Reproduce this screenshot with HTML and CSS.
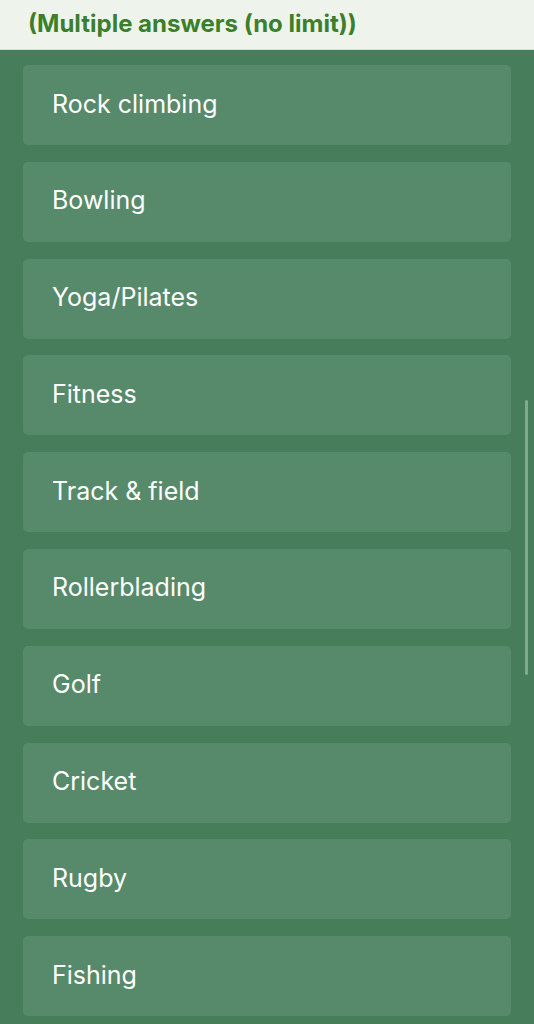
FILE: index.html
```html
<!DOCTYPE html>
<html lang="en">
<head>
<meta charset="utf-8">
<link rel="stylesheet" href="styles.css">
</head>
<body>
<header class="hint">(Multiple answers (no limit))</header>
<main class="options">
  <div class="option">Rock climbing</div>
  <div class="option">Bowling</div>
  <div class="option">Yoga/Pilates</div>
  <div class="option">Fitness</div>
  <div class="option">Track &amp; field</div>
  <div class="option">Rollerblading</div>
  <div class="option">Golf</div>
  <div class="option">Cricket</div>
  <div class="option">Rugby</div>
  <div class="option">Fishing</div>
</main>
<div class="scrollbar"></div>
</body>
</html>
```
FILE: styles.css
```css
html, body {
  margin: 0;
  padding: 0;
}
body {
  width: 534px;
  height: 1024px;
  overflow: hidden;
  background: #477d5b;
  font-family: Inter, "Noto Sans", sans-serif;
  position: relative;
}
.hint {
  height: 50px;
  box-sizing: border-box;
  background: #eef3ec;
  color: #3c7f2b;
  font-weight: 700;
  font-size: 24px;
  display: flex;
  align-items: center;
  padding: 0 0 3px 28px;
  border-bottom: 1px solid #d9e3d6;
}
.options {
  display: flex;
  flex-direction: column;
  gap: 16.8px;
  padding: 15px 23px 0 23px;
}
.option {
  height: 80px;
  box-sizing: border-box;
  background: #578a6b;
  border-radius: 5px;
  display: flex;
  align-items: center;
  padding: 0 0 3px 29px;
  color: #ffffff;
  font-size: 25px;
}
.scrollbar {
  position: absolute;
  left: 525px;
  top: 400px;
  width: 3px;
  height: 275px;
  border-radius: 2px;
  background: #7fab8e;
}
```
